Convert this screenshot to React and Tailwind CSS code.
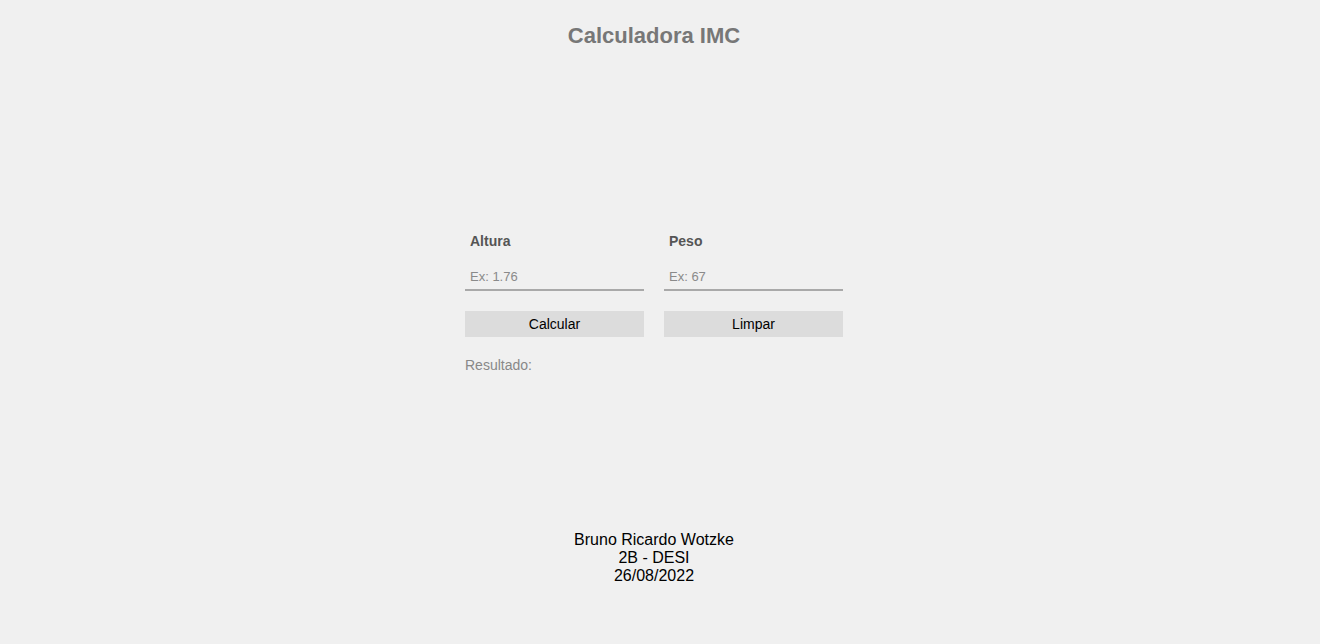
import React from 'react';

function Field({ label, placeholder }) {
  return (
    <div className="flex flex-col w-[179px]">
      <label className="pl-[5px] h-[16px] leading-[16px] text-[14px] font-bold text-[#555555]">{label}</label>
      <input
        type="text"
        placeholder={placeholder}
        className="mt-[14px] h-[28px] px-[5px] bg-transparent border-b-2 border-[#a9a9a9] text-[13px] text-[#333] placeholder:text-[#8a8a8a] outline-none"
      />
    </div>
  );
}

export default function App() {
  return (
    <div className="min-h-[644px] bg-[#f0f0f0] pr-[12px] font-['Liberation_Sans',Arial,sans-serif]">
      <h1 className="pt-[23px] text-center text-[22px] leading-[25px] font-bold text-[#777777]">Calculadora IMC</h1>

      <div className="mx-auto w-[378px] mt-[185px]">
        <div className="flex gap-[20px]">
          <Field label="Altura" placeholder="Ex: 1.76" />
          <Field label="Peso" placeholder="Ex: 67" />
        </div>
        <div className="flex gap-[20px] mt-[20px]">
          <button className="w-[179px] h-[26px] bg-[#dcdcdc] text-[14px] text-black">Calcular</button>
          <button className="w-[179px] h-[26px] bg-[#dcdcdc] text-[14px] text-black">Limpar</button>
        </div>
        <p className="mt-[20px] text-[14px] leading-[16px] text-[#888888]">Resultado:</p>
      </div>

      <footer className="mt-[158px] text-center text-[16px] leading-[18px] text-black">
        <p>Bruno Ricardo Wotzke</p>
        <p>2B - DESI</p>
        <p>26/08/2022</p>
      </footer>
    </div>
  );
}
